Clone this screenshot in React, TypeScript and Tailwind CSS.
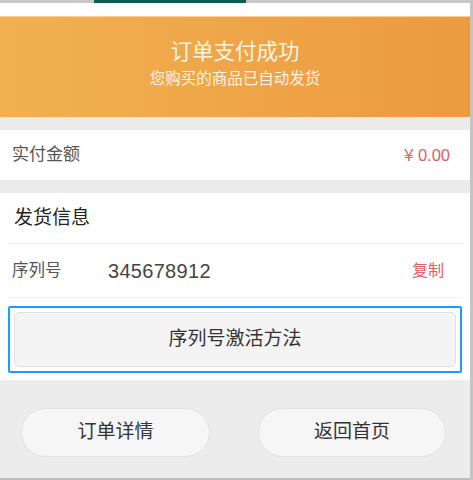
const font = { fontFamily: '"Liberation Sans", "Noto Sans CJK SC", "Noto Sans", sans-serif' };

const App = () => {
  return (
    <div className="flex w-[473px] h-[480px] bg-[#c4c4c4] overflow-hidden" style={font}>
      <div className="w-[470px] flex flex-col">
        {/* top strip from the page behind */}
        <div className="h-[3px] bg-[#c8c8c8] flex">
          <div className="ml-[94px] w-[152px] bg-[#0d5e52]" />
        </div>
        <div className="h-[13px] bg-white" />

        {/* success banner */}
        <div className="h-[101px] border-t border-[#f6cf9a] bg-gradient-to-r from-[#f1b150] to-[#ec9a3f] flex flex-col items-center justify-center text-[#fdf3e4]">
          <div className="text-[21.5px] leading-[28px] mt-[-8px]">订单支付成功</div>
          <div className="text-[15.5px] leading-[20px] mt-[3px]">您购买的商品已自动发货</div>
        </div>

        <div className="h-[13px] bg-[#ebebeb]" />

        {/* paid amount */}
        <div className="h-[50px] bg-white flex items-center justify-between pl-3 pr-5">
          <span className="text-[17px] text-[#555]">实付金额</span>
          <span className="text-[16.5px] text-[#e0606a]">¥ 0.00</span>
        </div>

        <div className="h-[13px] bg-[#ebebeb]" />

        {/* delivery info */}
        <div className="h-[187px] bg-white flex flex-col">
          <div className="h-[51px] mx-2 border-b border-[#ececec] flex items-center pl-[6px]">
            <span className="text-[19px] text-[#222]">发货信息</span>
          </div>
          <div className="h-[54px] mx-2 border-b border-[#f0f0f0] flex items-center">
            <span className="text-[16.5px] text-[#555] pl-1 w-[100px]">序列号</span>
            <span className="text-[20px] text-[#444] tracking-[0.3px]">345678912</span>
            <span className="ml-auto mr-[18px] text-[16px] text-[#e0606a]">复制</span>
          </div>
          <div className="mt-[8px] mx-2 h-[67px] border-[2px] border-[#1e9bff] rounded-[2px] p-[4px]">
            <button className="w-full h-full rounded-[5px] border border-[#dedede] bg-[#f4f4f4] text-[19px] text-[#333]">
              序列号激活方法
            </button>
          </div>
        </div>

        {/* bottom actions */}
        <div className="flex-1 bg-[#ececec] flex items-start pt-[28px] pl-[21px] gap-[48px]">
          <button className="w-[189px] h-[49px] rounded-full border border-[#e2e2e2] bg-[#f6f6f6] text-[19px] text-[#333]">
            订单详情
          </button>
          <button className="w-[188px] h-[49px] rounded-full border border-[#e2e2e2] bg-[#f6f6f6] text-[19px] text-[#333]">
            返回首页
          </button>
        </div>
        <div className="h-[2px] bg-[#bdbdbd]" />
      </div>
    </div>
  );
};

export default App;
